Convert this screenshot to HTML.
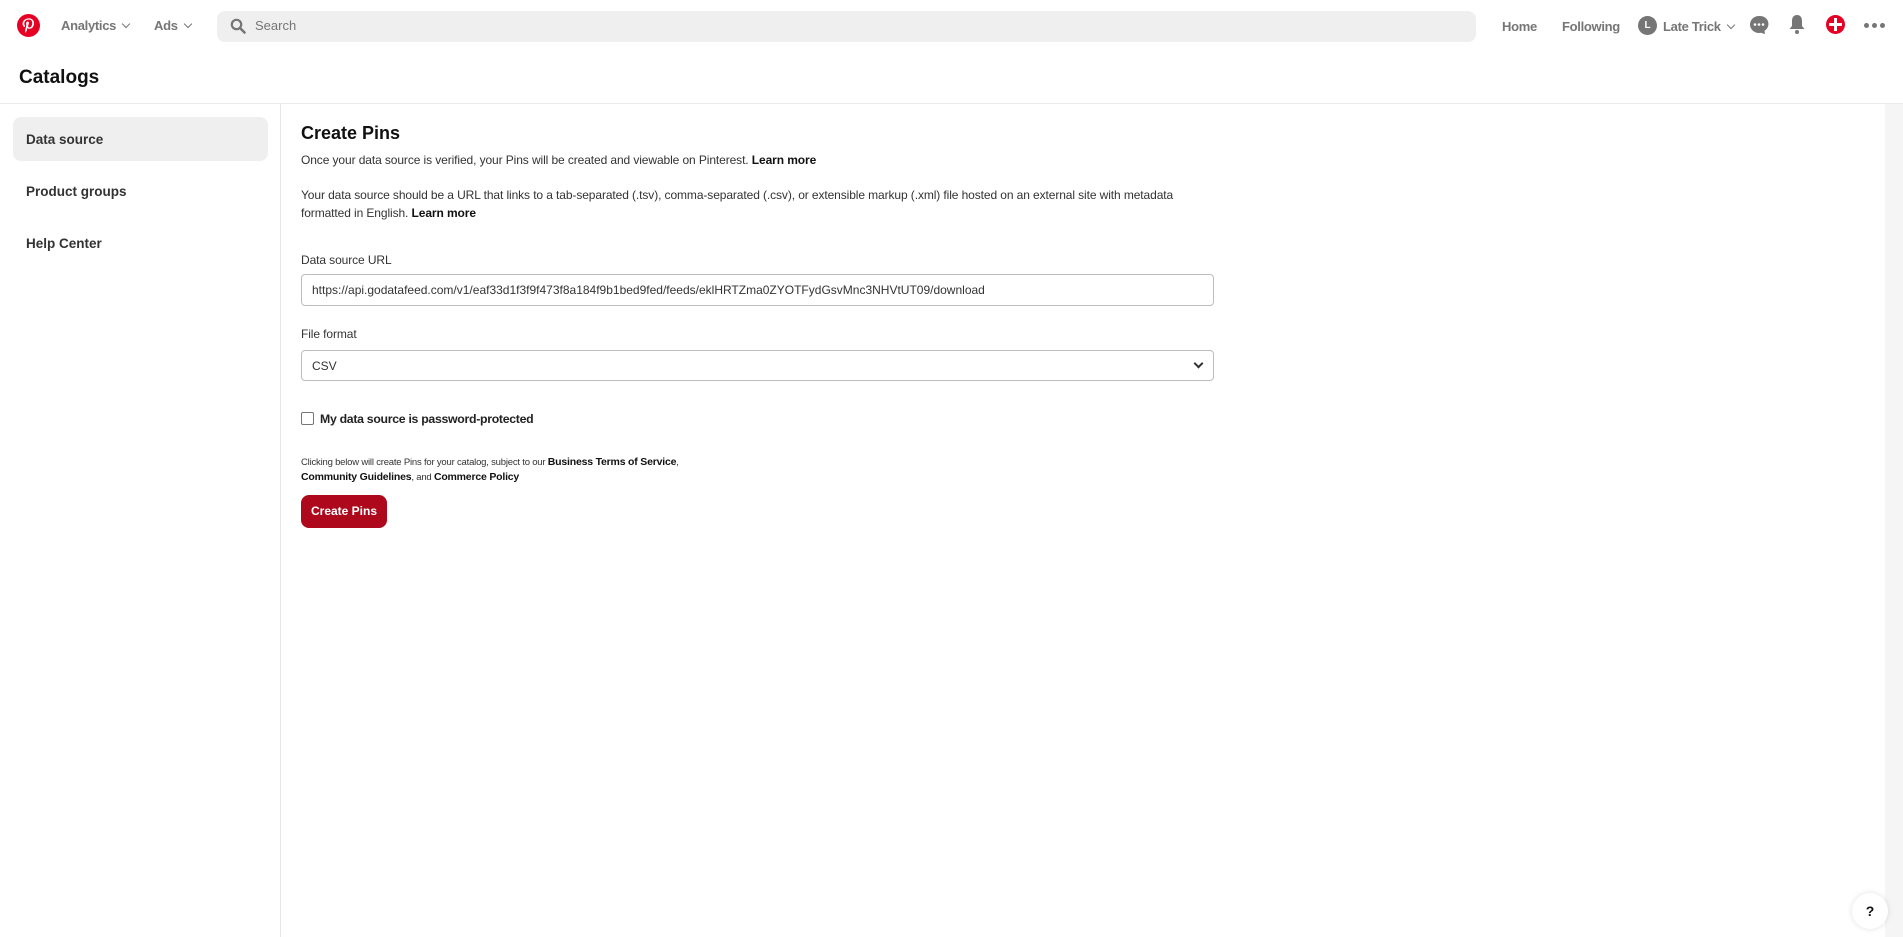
<!DOCTYPE html>
<html><head><meta charset="utf-8"><style>
*{box-sizing:border-box;margin:0;padding:0}
body{width:1903px;height:937px;overflow:hidden;background:#fff;font-family:"Liberation Sans",Arial,sans-serif;color:#111;position:relative}
.abs{position:absolute}
.nav{color:#767676;font-weight:bold;font-size:13px;letter-spacing:-0.3px}
.chev{display:inline-block;width:6px;height:6px;border-right:1.5px solid #767676;border-bottom:1.5px solid #767676;transform:rotate(45deg);margin-left:7px;position:relative;top:-3px}
.side{font-size:13.5px;font-weight:bold;color:#333}
.t{font-size:12px;color:#333;letter-spacing:-0.1px}
.t b{color:#111}
.field{border:1px solid #bdbdbd;border-radius:4px;font-size:12px;color:#333;padding-left:10px;display:flex;align-items:center}
</style></head><body>
<svg class="abs" style="left:17px;top:14px" width="23" height="23" viewBox="0 0 24 24"><circle cx="12" cy="12" r="12" fill="#e60023"/><path d="M12.3 4.5c-4.3 0-6.5 3-6.5 5.6 0 1.6.6 2.9 1.8 3.4.2.1.4 0 .5-.2l.2-.8c.1-.2 0-.3-.1-.5-.4-.4-.6-1-.6-1.8 0-2.3 1.700-4.4 4.500-4.4 2.5 0 3.8 1.5 3.8 3.5 0 2.6-1.2 4.8-2.9 4.8-.9 0-1.6-.8-1.4-1.7.3-1.1.8-2.4.8-3.2 0-.7-.4-1.4-1.2-1.4-1 0-1.700 1-1.700 2.3 0 .8.3 1.4.3 1.4l-1.1 4.7c-.3 1.4 0 3.1 0 3.3h.2c.1-.2 1.2-1.5 1.5-2.9l.6-2.3c.3.6 1.2 1.1 2.1 1.1 2.8 0 4.7-2.5 4.7-6 0-2.6-2.2-5-5.5-5z" fill="#fff"/></svg>
<div class="abs nav" style="left:61px;top:18px">Analytics<span class="chev"></span></div>
<div class="abs nav" style="left:154px;top:18px">Ads<span class="chev"></span></div>
<div class="abs" style="left:217px;top:11px;width:1259px;height:31px;background:#efefef;border-radius:8px"></div>
<svg class="abs" style="left:230px;top:18px" width="16" height="16" viewBox="0 0 16 16"><circle cx="6.5" cy="6.5" r="4.7" fill="none" stroke="#767676" stroke-width="2.2"/><path d="M10 10l4.5 4.5" stroke="#767676" stroke-width="2.6" stroke-linecap="round"/></svg>
<div class="abs" style="left:255px;top:18px;font-size:13px;color:#767676">Search</div>
<div class="abs nav" style="left:1502px;top:19px">Home</div>
<div class="abs nav" style="left:1562px;top:19px">Following</div>
<div class="abs" style="left:1638px;top:16px;width:19px;height:19px;border-radius:50%;background:#767676;color:#fff;font-size:10px;font-weight:bold;text-align:center;line-height:19px">L</div>
<div class="abs nav" style="left:1663px;top:19px">Late Trick<span class="chev"></span></div>
<svg class="abs" style="left:1749px;top:15px" width="20" height="20" viewBox="0 0 20 20"><path d="M10 1a9 8.5 0 1 0 0 17c.7 0 1.3-.1 1.9-.2L16 19l-.5-3.3A8.5 8 0 0 0 10 1z" fill="#767676"/><circle cx="6" cy="9.5" r="1.3" fill="#fff"/><circle cx="10" cy="9.5" r="1.3" fill="#fff"/><circle cx="14" cy="9.5" r="1.3" fill="#fff"/></svg>
<svg class="abs" style="left:1789px;top:14px" width="16" height="21" viewBox="0 0 16 21"><path d="M8 1c3.5 0 5 2.5 5 6v5l2.5 3H.5L3 12V7c0-3.5 1.5-6 5-6z" fill="#767676"/><circle cx="8" cy="18" r="2" fill="#767676"/></svg>
<div class="abs" style="left:1826px;top:15px;width:19px;height:19px;border-radius:50%;background:#e60023"></div>
<div class="abs" style="left:1829px;top:23px;width:13px;height:3px;background:#fff"></div>
<div class="abs" style="left:1834px;top:18px;width:3px;height:13px;background:#fff"></div>
<div class="abs" style="left:1864px;top:23px;display:flex;gap:3px"><i style="width:5px;height:5px;border-radius:50%;background:#767676"></i><i style="width:5px;height:5px;border-radius:50%;background:#767676"></i><i style="width:5px;height:5px;border-radius:50%;background:#767676"></i></div>

<div class="abs" style="left:19px;top:67px;font-size:19px;font-weight:bold">Catalogs</div>
<div class="abs" style="left:0;top:103px;width:1903px;height:1px;background:#ececec"></div>
<div class="abs" style="left:280px;top:104px;width:1px;height:833px;background:#e6e6e6"></div>
<div class="abs" style="left:13px;top:117px;width:255px;height:44px;background:#efefef;border-radius:8px"></div>
<div class="abs side" style="left:26px;top:132px">Data source</div>
<div class="abs side" style="left:26px;top:184px">Product groups</div>
<div class="abs side" style="left:26px;top:236px">Help Center</div>

<div class="abs" style="left:301px;top:123px;font-size:18px;font-weight:bold">Create Pins</div>
<div class="abs t" style="left:301px;top:153px">Once your data source is verified, your Pins will be created and viewable on Pinterest. <b>Learn more</b></div>
<div class="abs t" style="left:301px;top:186px;width:920px;line-height:18px">Your data source should be a URL that links to a tab-separated (.tsv), comma-separated (.csv), or extensible markup (.xml) file hosted on an external site with metadata formatted in English. <b>Learn more</b></div>
<div class="abs t" style="left:301px;top:253px">Data source URL</div>
<div class="abs field" style="left:301px;top:274px;width:913px;height:32px">https://api.godatafeed.com/v1/eaf33d1f3f9f473f8a184f9b1bed9fed/feeds/eklHRTZma0ZYOTFydGsvMnc3NHVtUT09/download</div>
<div class="abs t" style="left:301px;top:327px">File format</div>
<div class="abs field" style="left:301px;top:350px;width:913px;height:31px">CSV</div>
<div class="abs" style="left:1195px;top:360px;width:7px;height:7px;border-right:2px solid #333;border-bottom:2px solid #333;transform:rotate(45deg)"></div>
<div class="abs" style="left:301px;top:412px;width:13px;height:13px;border:1px solid #767676;border-radius:2px"></div>
<div class="abs" style="left:320px;top:412px;font-size:12.3px;font-weight:bold;color:#222;letter-spacing:-0.3px">My data source is password-protected</div>
<div class="abs" style="left:301px;top:455px;font-size:9.5px;color:#333;line-height:15px;letter-spacing:-0.2px">Clicking below will create Pins for your catalog, subject to our <b style="font-size:10.5px;color:#111">Business Terms of Service</b>,<br><b style="font-size:10.5px;color:#111">Community Guidelines</b>, and <b style="font-size:10.5px;color:#111">Commerce Policy</b></div>
<div class="abs" style="left:301px;top:495px;width:86px;height:33px;background:#ad081b;border-radius:8px;color:#fff;font-size:12px;font-weight:bold;text-align:center;line-height:33px">Create Pins</div>

<div class="abs" style="left:1885px;top:104px;width:18px;height:833px;background:#f5f5f5"></div>
<div class="abs" style="left:1852px;top:893px;width:36px;height:36px;border-radius:50%;background:#fff;box-shadow:0 0 6px rgba(0,0,0,.12);font-weight:bold;font-size:14px;text-align:center;line-height:36px">?</div>
</body></html>
